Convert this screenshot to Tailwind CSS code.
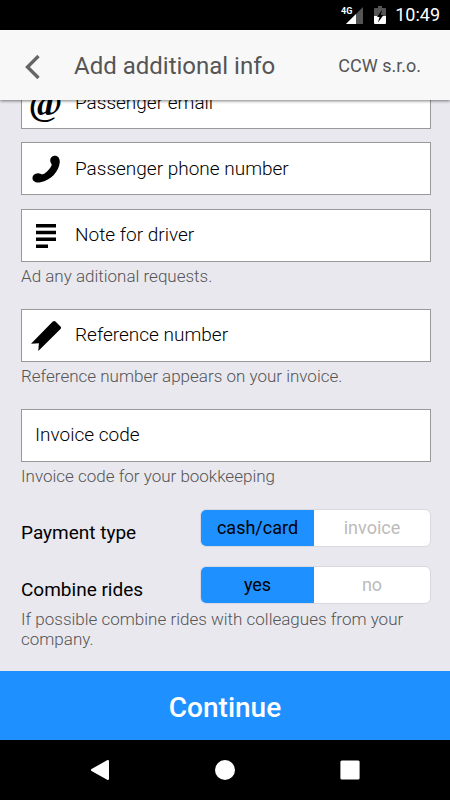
<!DOCTYPE html>
<html lang="en">
<head>
<meta charset="utf-8">
<meta name="viewport" content="width=device-width, initial-scale=1">
<title>Add additional info</title>
<script src="https://cdn.jsdelivr.net/npm/@tailwindcss/browser@4"></script>
</head>
<body class="flex h-screen flex-col overflow-hidden bg-[#e9e8ee] font-[Roboto,sans-serif] text-black">

<div class="flex h-[30px] shrink-0 items-center justify-end bg-black pr-[10px] text-white">
  <svg class="mr-[10px] h-5 w-6" viewBox="0 0 24 20" role="img" aria-label="4G signal">
    <path d="M23 2V19H6Z" fill="#555"/>
    <path d="M16 9V19H6Z" fill="#fff"/>
    <text x="1" y="9" font-size="9" font-weight="700" font-family="Roboto, sans-serif" fill="#fff" stroke="#000" stroke-width="2" paint-order="stroke">4G</text>
  </svg>
  <svg class="mr-[9px] h-5 w-3" viewBox="0 0 12 20" role="img" aria-label="Battery charging">
    <path d="M4 1h4v2h3q1 0 1 1v7H0V4q0-1 1-1h3Z" fill="#555"/>
    <path d="M0 11h12v7q0 1-1 1H1q-1 0-1-1Z" fill="#fff"/>
    <path d="M8 5 3 12h2.500L4 17.500 9.500 10H6.800Z" fill="#000"/>
  </svg>
  <span class="text-lg leading-[30px]">10:49</span>
</div>

<header class="z-10 flex h-[70px] shrink-0 items-center bg-[#f8f8f8] pr-[29px] pl-[22px] text-[#555] shadow-[0_1px_3px_rgba(0,0,0,0.5)]">
  <button type="button" aria-label="Back" class="mr-8 flex h-10 w-5 items-center">
    <svg class="mt-1 h-6 w-5" viewBox="0 0 20 24"><path d="M16.500 1 5.500 12l11 11" fill="none" stroke="#666" stroke-width="3.400"/></svg>
  </button>
  <h1 class="flex-1 pt-0.5 text-2xl text-[#555]">Add additional info</h1>
  <a href="#" class="pt-0.5 text-lg">CCW s.r.o.</a>
</header>

<main class="flex min-h-0 flex-1 flex-col justify-end overflow-hidden pr-[19px] pb-[22px] pl-[21px]">
  <form id="info" class="flex shrink-0 flex-col">
    <label class="mb-[13px] flex h-[53px] items-center border border-[#999] bg-white">
      <span class="flex w-[53px] justify-center pr-[6px] font-['Liberation_Serif',serif] text-4xl leading-none font-bold" aria-hidden="true">@</span>
      <input type="email" aria-label="Passenger email" placeholder="Passenger email" class="h-full min-w-0 flex-1 text-[19px] font-light outline-none placeholder:text-black">
    </label>

    <label class="mb-[14px] flex h-[53px] items-center border border-[#999] bg-white">
      <span class="flex w-[53px] justify-center pr-[6px]">
        <svg class="h-7 w-7" viewBox="0 0 28 28"><path d="M22 .8C25.500 0 28.200 3 27.700 7.500C27 16 19 25.500 8.500 27.200C4 28 .5 26.500.500 23.200C.5 20.500 2.500 18.300 6 18.200C8.500 18.200 9 19.500 10.800 19.200C14.500 18 18 13.500 19.700 10.200C20 8.800 18.200 8 18.200 5.200C18.300 2.800 20 1.200 22 .8Z"/></svg>
      </span>
      <input type="tel" aria-label="Passenger phone number" placeholder="Passenger phone number" class="h-full min-w-0 flex-1 text-[19px] font-light outline-none placeholder:text-black">
    </label>

    <label class="flex h-[53px] items-center border border-[#999] bg-white">
      <span class="flex w-[53px] justify-center pr-[6px]">
        <svg class="h-6 w-5" viewBox="0 0 20 24"><path d="M0 0h20v3.500H0ZM0 6.800h20v3.500H0ZM0 13.600h20v3.500H0ZM0 20.400h12v3.500H0Z"/></svg>
      </span>
      <input type="text" aria-label="Note for driver" aria-describedby="note-help" placeholder="Note for driver" class="h-full min-w-0 flex-1 pb-0.5 text-[19px] font-light outline-none placeholder:text-black">
    </label>
    <p id="note-help" class="mt-1 mb-[23px] text-[17px] leading-5 font-light text-[#555]">Ad any aditional requests.</p>

    <label class="flex h-[53px] items-center border border-[#999] bg-white">
      <span class="flex w-[53px] justify-center pr-[6px]">
        <svg class="h-[30px] w-[30px]" viewBox="0 0 30 30"><path d="M0 22.800 21.800.600Q23.200-.4 24.500.600L29.500 5.500Q30.500 6.700 29.500 8L7.300 30 7.900 22.200Z"/></svg>
      </span>
      <input type="text" aria-label="Reference number" aria-describedby="reference-help" placeholder="Reference number" class="h-full min-w-0 flex-1 pb-0.5 text-[19px] font-light outline-none placeholder:text-black">
    </label>
    <p id="reference-help" class="mt-1 mb-[23px] text-[17px] leading-5 font-light text-[#555]">Reference number appears on your invoice.</p>

    <label class="flex h-[53px] items-center border border-[#999] bg-white pl-[13px]">
      <input type="text" aria-label="Invoice code" aria-describedby="code-help" placeholder="Invoice code" class="h-full min-w-0 flex-1 pb-0.5 text-[19px] font-light outline-none placeholder:text-black">
    </label>
    <p id="code-help" class="mt-1 mb-[23px] text-[17px] leading-5 font-light text-[#555]">Invoice code for your bookkeeping</p>

    <fieldset class="mb-[19px] flex h-[38px]" aria-labelledby="payment">
      <span id="payment" class="flex-1 pt-[10px] text-[19px] leading-7">Payment type</span>
      <div class="grid w-[231px] grid-cols-[113fr_116fr] overflow-hidden rounded-md border border-[#d8d8de] bg-white text-center text-lg leading-9">
        <label class="text-[#bbb] has-checked:bg-[#1e90ff] has-checked:text-black"><input type="radio" name="payment" class="sr-only" checked>cash/card</label>
        <label class="text-[#bbb] has-checked:bg-[#1e90ff] has-checked:text-black"><input type="radio" name="payment" class="sr-only">invoice</label>
      </div>
    </fieldset>

    <fieldset class="flex h-[38px]" aria-labelledby="combine" aria-describedby="combine-help">
      <span id="combine" class="flex-1 pt-[10px] text-[19px] leading-7">Combine rides</span>
      <div class="grid w-[231px] grid-cols-[113fr_116fr] overflow-hidden rounded-md border border-[#d8d8de] bg-white text-center text-lg leading-9">
        <label class="text-[#bbb] has-checked:bg-[#1e90ff] has-checked:text-black"><input type="radio" name="combine" class="sr-only" checked>yes</label>
        <label class="text-[#bbb] has-checked:bg-[#1e90ff] has-checked:text-black"><input type="radio" name="combine" class="sr-only">no</label>
      </div>
    </fieldset>
    <p id="combine-help" class="mt-[5px] text-[17px] leading-5 font-light text-[#555]">If possible combine rides with colleagues from your company.</p>
  </form>
</main>

<button type="submit" form="info" class="h-[69px] shrink-0 bg-[#1e90ff] pt-1 text-[28px] font-medium text-white">Continue</button>

<nav class="flex h-[60px] shrink-0 items-center justify-center gap-[105px] bg-black" aria-label="System">
  <button type="button" aria-label="Back"><svg class="h-5 w-5" viewBox="0 0 20 20"><path d="M17 .3Q19 -.5 19 1.200V18.800Q19 20.500 17.200 19.700L1.500 11Q.3 10 1.500 9Z" fill="#fff"/></svg></button>
  <button type="button" aria-label="Home"><svg class="h-5 w-5" viewBox="0 0 20 20"><circle cx="10" cy="10" r="10" fill="#fff"/></svg></button>
  <button type="button" aria-label="Recent apps"><svg class="h-5 w-5" viewBox="0 0 20 20"><rect x=".4" y=".4" width="19.200" height="19.200" rx="1.500" fill="#fff"/></svg></button>
</nav>
</body>
</html>
